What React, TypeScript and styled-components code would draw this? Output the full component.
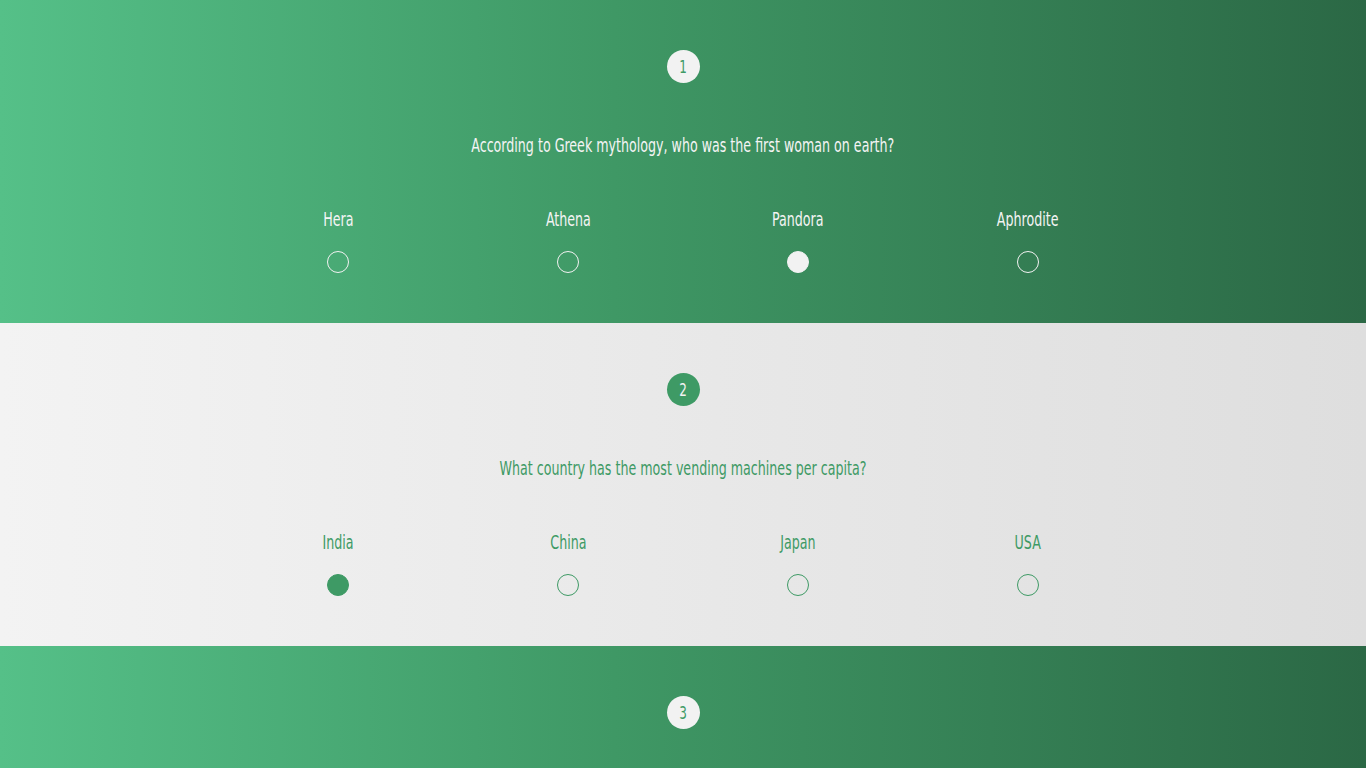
import React, { useState } from 'react';
import styled, { createGlobalStyle } from 'styled-components';

const GlobalStyle = createGlobalStyle`
  html, body {
    margin: 0;
    padding: 0;
  }
  body {
    font-family: "DejaVu Sans", "Liberation Sans", sans-serif;
    font-stretch: condensed;
  }
  * { box-sizing: border-box; }
`;

interface Question {
  text: string;
  options: string[];
}

const questions: Question[] = [
  {
    text: 'According to Greek mythology, who was the first woman on earth?',
    options: ['Hera', 'Athena', 'Pandora', 'Aphrodite'],
  },
  {
    text: 'What country has the most vending machines per capita?',
    options: ['India', 'China', 'Japan', 'USA'],
  },
  {
    text: 'What is the largest planet in our solar system?',
    options: ['Earth', 'Jupiter', 'Saturn', 'Neptune'],
  },
];

const Section = styled.section<{ $light: boolean }>`
  height: 323px;
  padding-top: 50px;
  display: flex;
  flex-direction: column;
  align-items: center;
  background: ${(p) =>
    p.$light
      ? 'linear-gradient(to right, #f3f3f3 0%, #dedede 100%)'
      : 'linear-gradient(to right, #55c088 0%, #3f9865 45%, #2b6845 100%)'};
  color: ${(p) => (p.$light ? '#3e9a65' : '#f4f4f4')};
`;

const Badge = styled.div<{ $light: boolean }>`
  width: 33px;
  height: 33px;
  border-radius: 50%;
  display: flex;
  align-items: center;
  justify-content: center;
  font-size: 18px;
  font-weight: 400;
  background: ${(p) => (p.$light ? '#3e9a65' : '#f2f2f2')};
  color: ${(p) => (p.$light ? '#f2f2f2' : '#3e9a65')};
`;

/* narrow face: scale the text horizontally to mimic a condensed display font */
const Narrow = styled.span`
  display: inline-block;
  transform: scaleX(0.74);
  white-space: nowrap;
`;

const QuestionText = styled.h2`
  margin: 51px 0 0;
  font-size: 19px;
  line-height: 23px;
  font-weight: 400;
  text-align: center;
`;

const Options = styled.div`
  margin-top: 51px;
  width: 920px;
  display: grid;
  grid-template-columns: repeat(4, 1fr);
`;

const Option = styled.label`
  display: flex;
  flex-direction: column;
  align-items: center;
  cursor: pointer;
`;

const OptionLabel = styled.span`
  font-size: 19px;
  line-height: 23px;
`;

const Radio = styled.input<{ $light: boolean }>`
  appearance: none;
  margin: 20px 0 0;
  width: 22px;
  height: 22px;
  border-radius: 50%;
  cursor: pointer;
  border: 1px solid ${(p) => (p.$light ? '#3e9a65' : '#f2f2f2')};
  background: transparent;

  &:checked {
    background: ${(p) => (p.$light ? '#3e9a65' : '#f2f2f2')};
  }
`;

const App = () => {
  const [answers, setAnswers] = useState<Record<number, string>>({
    0: 'Pandora',
    1: 'India',
  });

  return (
    <>
      <GlobalStyle />
      {questions.map((q, i) => {
        const light = i % 2 === 1;
        return (
          <Section key={i} $light={light}>
            <Badge $light={light}>
              <Narrow>{i + 1}</Narrow>
            </Badge>
            <QuestionText>
              <Narrow>{q.text}</Narrow>
            </QuestionText>
            <Options>
              {q.options.map((opt) => (
                <Option key={opt}>
                  <OptionLabel>
                    <Narrow>{opt}</Narrow>
                  </OptionLabel>
                  <Radio
                    type="radio"
                    name={`q${i}`}
                    $light={light}
                    checked={answers[i] === opt}
                    onChange={() => setAnswers({ ...answers, [i]: opt })}
                  />
                </Option>
              ))}
            </Options>
          </Section>
        );
      })}
    </>
  );
};

export default App;
